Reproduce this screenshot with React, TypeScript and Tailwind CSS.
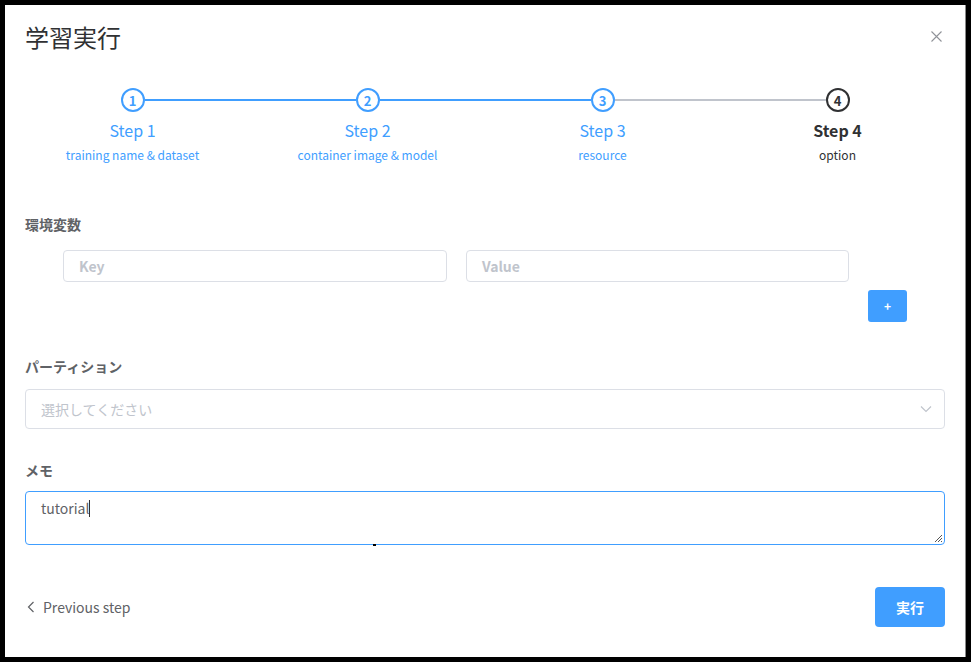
import React from "react";

const steps = [
  { n: 1, title: "Step 1", desc: "training name & dataset" },
  { n: 2, title: "Step 2", desc: "container image & model" },
  { n: 3, title: "Step 3", desc: "resource" },
  { n: 4, title: "Step 4", desc: "option" },
];

function Step({ n, title, desc, idx }: { n: number; title: string; desc: string; idx: number }) {
  const active = n === 4;
  const leftColor = idx === 0 ? "bg-transparent" : idx === 3 ? "bg-[#c0c4cc]" : "bg-[#409eff]";
  const rightColor = idx === 3 ? "bg-transparent" : idx === 2 ? "bg-[#c0c4cc]" : "bg-[#409eff]";
  return (
    <div className="flex flex-col items-center">
      <div className="flex items-center w-full h-[24px]">
        <div className={`flex-1 h-[2px] ${leftColor}`} />
        <div
          className={`w-[24px] h-[24px] rounded-full border-2 flex items-center justify-center text-[13px] font-bold leading-none ${
            active ? "border-[#303133] text-[#303133]" : "border-[#409eff] text-[#409eff]"
          }`}
        >
          {n}
        </div>
        <div className={`flex-1 h-[2px] ${rightColor}`} />
      </div>
      <div
        className={`mt-[6px] text-[16px] leading-[24px] ${
          active ? "font-bold text-[#303133]" : "text-[#409eff]"
        }`}
      >
        {title}
      </div>
      <div className={`mt-[3px] text-[12px] leading-[20px] ${active ? "text-[#303133]" : "text-[#409eff]"}`}>{desc}</div>
    </div>
  );
}

export default function App() {
  return (
    <div
      className="w-[971px] h-[662px] bg-black pt-[5px] pl-[5px] overflow-hidden"
      style={{ fontFamily: '"Noto Sans CJK JP", "Noto Sans", sans-serif' }}
    >
      <div className="relative w-[961px] h-[652px] bg-white border-r border-[#8a8a8a] flex flex-col">
        {/* header */}
        <div className="flex items-start justify-between pl-[20px] pr-[23px] pt-[16px]">
          <div className="text-[24px] leading-[32px] text-[#303133]">学習実行</div>
          <svg width="11" height="11" viewBox="0 0 11 11" className="mt-[10px]">
            <path d="M0.5 0.5 L10.5 10.5 M10.5 0.5 L0.5 10.5" stroke="#909399" strokeWidth="1.1" />
          </svg>
        </div>

        {/* steps */}
        <div className="mt-[35px] mx-[10px] grid grid-cols-4">
          {steps.map((s, i) => (
            <Step key={s.n} {...s} idx={i} />
          ))}
        </div>

        {/* body */}
        <div className="px-[20px] flex flex-col">
          <div className="mt-[49px] text-[14px] leading-[20px] font-bold text-[#606266]">環境変数</div>
          <div className="flex mt-[16px] pl-[38px]">
            <div className="w-[384px] h-[32px] border border-[#dcdfe6] rounded-[4px] flex items-center pl-[15px] text-[14px] font-bold text-[#c0c4cc]">
              Key
            </div>
            <div className="ml-[19px] w-[383px] h-[32px] border border-[#dcdfe6] rounded-[4px] flex items-center pl-[15px] text-[14px] font-bold text-[#c0c4cc]">
              Value
            </div>
            <div className="ml-[19px] mt-[40px] w-[39px] h-[32px] rounded-[3px] bg-[#409eff] flex items-center justify-center text-white text-[12px] font-bold">
              +
            </div>
          </div>

          <div className="mt-[34px] text-[14px] leading-[20px] font-bold text-[#606266]">パーティション</div>
          <div className="mt-[13px] h-[40px] w-[920px] border border-[#dcdfe6] rounded-[4px] flex items-center justify-between pl-[15px] pr-[12px]">
            <span className="text-[14px] leading-[20px] -mt-[1px] text-[#c0c4cc]">選択してください</span>
            <svg width="12" height="8" viewBox="0 0 12 8">
              <path d="M1 1.5 L6 6.5 L11 1.5" fill="none" stroke="#c0c4cc" strokeWidth="1.2" />
            </svg>
          </div>

          <div className="mt-[31px] text-[14px] leading-[20px] font-bold text-[#606266]">メモ</div>
          <div className="relative mt-[11px] h-[54px] w-[920px] border border-[#409eff] rounded-[4px] pl-[15px] pt-[3px]">
            <span className="text-[14px] leading-[22px] text-[#606266]">tutorial</span>
            <span className="inline-block align-middle w-[1px] h-[17px] bg-[#303133] -mt-[3px]" />
            <svg width="9" height="9" viewBox="0 0 9 9" className="absolute right-[1px] bottom-[1px]">
              <path d="M8 1 L1 8 M8 4 L4 8 M8 7 L7 8" stroke="#555" strokeWidth="1" />
            </svg>
            <span className="absolute left-[347px] bottom-[-2px] w-[3px] h-[2px] bg-black" />
          </div>

          <div className="mt-[42px] flex items-center justify-between">
            <div className="flex items-center text-[14px] text-[#606266]">
              <svg width="8" height="12" viewBox="0 0 8 12" className="ml-[2px] mr-[8px]">
                <path d="M6.5 1 L1.5 6 L6.5 11" fill="none" stroke="#606266" strokeWidth="1.2" />
              </svg>
              Previous step
            </div>
            <div className="w-[70px] h-[40px] rounded-[4px] bg-[#409eff] flex items-center justify-center text-white text-[14px] font-bold">
              実行
            </div>
          </div>
        </div>
      </div>
    </div>
  );
}
